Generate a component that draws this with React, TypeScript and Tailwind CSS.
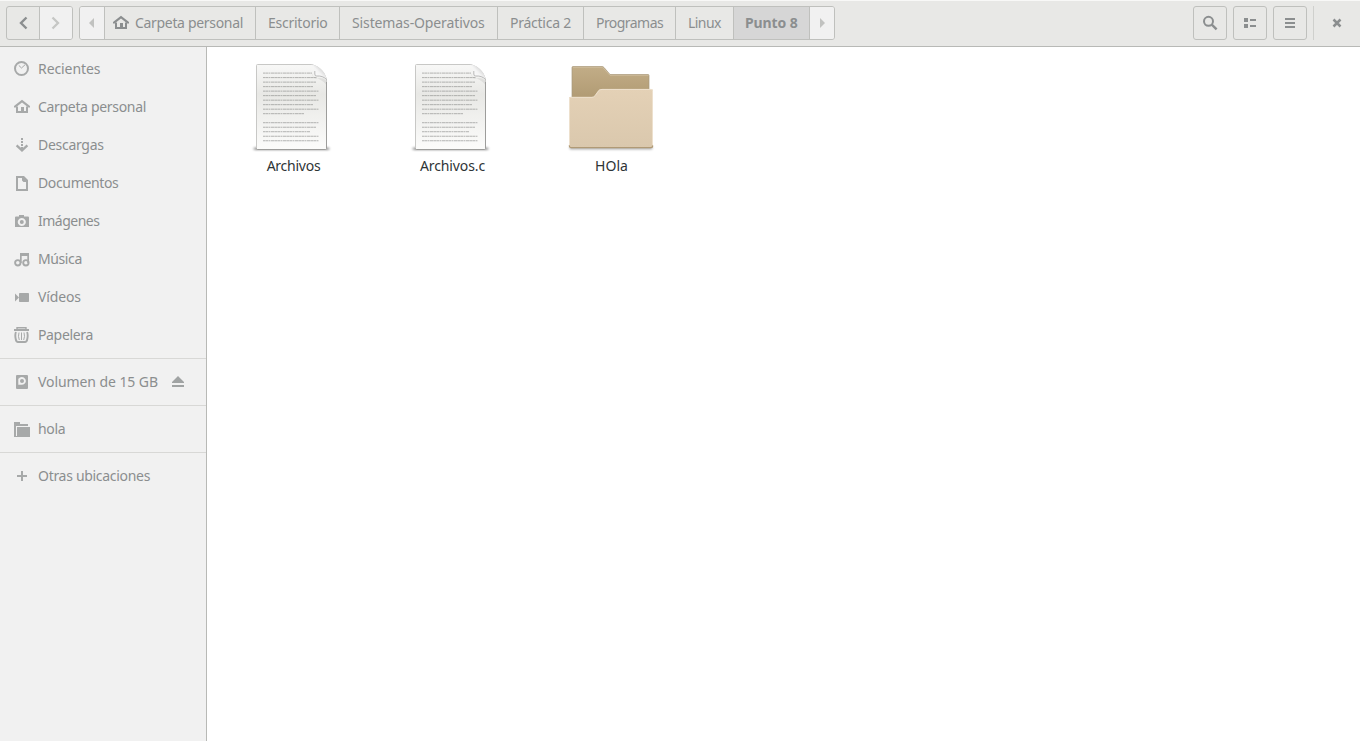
import type { ReactNode } from "react";

function Icon({ children, className = "" }: { children: ReactNode; className?: string }) {
  return (
    <svg width="16" height="16" viewBox="0 0 16 16" fill="currentColor" className={`shrink-0 ${className}`}>
      {children}
    </svg>
  );
}

const home = (
  <>
    <path d="M8 .8 0 7v1.6h1.6L8 3.6l6.4 5H16V7z" />
    <path d="M2 7.5V14h12V7.5h-2V12h-2V8H7v4H4V7.5z" />
  </>
);

const icons: Record<string, ReactNode> = {
  recent: (
    <g fill="none" stroke="currentColor">
      <circle cx="7.5" cy="7.5" r="6.5" strokeWidth="2" />
      <path d="m4.8 4.4 2.7 2.6L11 3.8" />
    </g>
  ),
  home,
  download: (
    <>
      <path d="M7 1h2v2H7zM7 4h2v2H7zM7 7h2v2H7zM7 10h2v3H7z" />
      <path d="m2.6 8.4 5.4 5 5.4-5" fill="none" stroke="currentColor" strokeWidth="2.3" />
    </>
  ),
  document: <path fillRule="evenodd" d="M2 1h8l4 4v11H2zm2 2v11h8V7H9.500L8 5.500V3z" />,
  camera: (
    <>
      <path fillRule="evenodd" d="M5 2h5v1.5h4q1 0 1 1V14H1V4.5q0-1 1-1h3zM7.8 5a4 4 0 1 0 .01 0z" />
      <circle cx="7.8" cy="9" r="2" />
    </>
  ),
  music: (
    <>
      <path d="M6 2h9v10h-1.7V5H7.7v7H6z" />
      <g fill="none" stroke="currentColor" strokeWidth="1.9">
        <circle cx="3.8" cy="11.8" r="2.7" />
        <circle cx="11.9" cy="11.8" r="2.7" />
      </g>
    </>
  ),
  video: (
    <>
      <path d="M1 4.5v8l4-4z" />
      <rect x="5" y="4" width="10" height="9" rx=".7" />
    </>
  ),
  trash: (
    <g fill="none" stroke="currentColor">
      <path d="M0 3h15" strokeWidth="2" />
      <path d="M3 2V.7h9V2" strokeWidth="1.4" />
      <path d="M1.9 5Q.8 8 1.7 12q.5 3 2.3 3h7q1.8 0 2.3-3 .9-4-.2-7" strokeWidth="1.9" />
      <path d="M7.5 5.5V13M5 5.5q-1.200 4 .3 7.5M10 5.5q1.200 4-.3 7.5" />
    </g>
  ),
  disk: (
    <>
      <path fillRule="evenodd" d="M2 2q0-1 1-1h10q1 0 1 1v12q0 1-1 1H3q-1 0-1-1zM4.3 3v7.8H8A3.9 3.9 0 1 0 4.5 5z" />
      <circle cx="8" cy="7" r="2" />
    </>
  ),
  folder: (
    <>
      <path d="M0 1h6v2h8v2H2v11H0z" />
      <path d="M3 6h13v10H3z" />
      <path d="M0 15h16v1H0z" />
    </>
  ),
  plus: <path d="M7 3h2v4h4v2H9v4H7V9H3V7h4z" />,
};

function PlaceRow({ icon, label, tracking, eject }: { icon: string; label: string; tracking: string; eject?: boolean }) {
  return (
    <div className="flex h-[38px] items-center pl-[14px] text-[#8b8e8f]">
      <Icon className="text-[#a7a9a9]">{icons[icon]}</Icon>
      <span className={`ml-2 pb-[2px] whitespace-nowrap ${tracking}`}>{label}</span>
      {eject && (
        <svg width="12" height="12" viewBox="0 0 12 12" className="mr-[22px] ml-auto text-[#a0a3a3]" fill="currentColor">
          <path d="m6 0 6 6v1H0V6zM0 9h12v2H0z" />
        </svg>
      )}
    </div>
  );
}

function Divider() {
  return <div className="my-1 h-px bg-[#d8d8d6]" />;
}

const places = [
  { icon: "recent", label: "Recientes", tracking: "tracking-[-0.08px]" },
  { icon: "home", label: "Carpeta personal", tracking: "tracking-[-0.32px]" },
  { icon: "download", label: "Descargas", tracking: "tracking-[-0.28px]" },
  { icon: "document", label: "Documentos", tracking: "tracking-[-0.35px]" },
  { icon: "camera", label: "Imágenes", tracking: "tracking-[-0.5px]" },
  { icon: "music", label: "Música", tracking: "tracking-[-0.4px]" },
  { icon: "video", label: "Vídeos", tracking: "tracking-[-0.15px]" },
  { icon: "trash", label: "Papelera", tracking: "tracking-[-0.35px]" },
];

const crumbs = [
  { label: "Escritorio", box: "w-[84px]", tracking: "tracking-[-0.25px]" },
  { label: "Sistemas-Operativos", box: "w-[158px]", tracking: "tracking-[-0.12px]" },
  { label: "Práctica 2", box: "w-[86px]", tracking: "tracking-[-0.25px]" },
  { label: "Programas", box: "w-[92px]", tracking: "tracking-[-0.55px]" },
  { label: "Linux", box: "w-[58px]", tracking: "tracking-[-0.55px]" },
];

function ToolButton({ children }: { children: ReactNode }) {
  return (
    <button className="flex h-[34px] w-[34px] items-center justify-center rounded-[3px] border border-[#bfc0bd]">
      <Icon>{children}</Icon>
    </button>
  );
}

function HeaderBar() {
  return (
    <header className="flex h-[47px] shrink-0 items-start border-t border-b border-t-[#f8f8f7] border-b-[#b8b9b6] bg-[#e8e8e6] px-[6px] pt-[5px] text-[#8b8e8f]">
      <div className="flex h-[34px] w-[67px] overflow-hidden rounded-[3px] border border-[#bfc0bd]">
        <button className="flex w-[33px] items-center justify-center border-r border-[#bfc0bd]">
          <Icon>
            <path d="M11.5 2.5 6 8l5.5 5.5" fill="none" stroke="currentColor" strokeWidth="2.4" />
          </Icon>
        </button>
        <button className="flex flex-1 items-center justify-center bg-[#f1f1f1] text-[#c6c7c5]">
          <Icon>
            <path d="M4.5 2.5 10 8l-5.5 5.5" fill="none" stroke="currentColor" strokeWidth="2.3" />
          </Icon>
        </button>
      </div>
      <nav className="ml-[6px] flex h-[34px] w-[756px] overflow-hidden rounded-[3px] border border-[#bfc0bd]">
        <button className="flex w-[25px] shrink-0 items-center border-r border-[#bfc0bd] bg-[#f1f1f1] pl-[9px] text-[#c1c2c0]">
          <svg width="5" height="10" viewBox="0 0 5 10" fill="currentColor"><path d="M5 0v10L0 5z" /></svg>
        </button>
        <button className="flex w-[151px] shrink-0 items-center border-r border-[#bfc0bd] pl-2">
          <Icon>{home}</Icon>
          <span className="ml-[6px] pb-[2px] whitespace-nowrap tracking-[-0.32px]">Carpeta personal</span>
        </button>
        {crumbs.map((c) => (
          <button key={c.label} className={`flex shrink-0 items-center border-r border-[#bfc0bd] pb-[2px] pl-3 whitespace-nowrap ${c.box} ${c.tracking}`}>
            {c.label}
          </button>
        ))}
        <button className="flex w-[76px] shrink-0 items-center border-r border-[#bfc0bd] bg-[#d6d6d6] pb-[2px] pl-[11px] font-bold whitespace-nowrap tracking-[-0.1px]">
          Punto 8
        </button>
        <button className="flex flex-1 items-center bg-[#f1f1f1] pl-[10px] text-[#c1c2c0]">
          <svg width="5" height="10" viewBox="0 0 5 10" fill="currentColor"><path d="M0 0v10l5-5z" /></svg>
        </button>
      </nav>
      <div className="ml-auto flex gap-[6px]">
        <ToolButton>
          <circle cx="6.5" cy="6.3" r="4.5" fill="none" stroke="currentColor" strokeWidth="2" />
          <path d="m9.8 9.6 4.8 4.7" fill="none" stroke="currentColor" strokeWidth="2.4" />
        </ToolButton>
        <ToolButton>
          <path d="M2 3h4v4H2zM2 9h4v4H2zM8 4h6v2H8zM8 10h6v2H8z" />
        </ToolButton>
        <ToolButton>
          <path d="M3 3h10v2H3zM3 7h10v2H3zM3 11h10v2H3z" />
        </ToolButton>
        <div className="h-[34px] w-px bg-[#cfd0cd]" />
        <button className="flex h-[34px] w-[34px] items-center justify-center">
          <Icon>
            <path d="m4.500 4.500 7 7m0-7-7 7" fill="none" stroke="currentColor" strokeWidth="2.500" />
          </Icon>
        </button>
      </div>
    </header>
  );
}

const lines = [49, 54, 53, 50, 56, 53, 56, 50, 56, 41, 0, 56, 53, 47, 56, 56];

function FileArt({ id }: { id: string }) {
  return (
    <svg width="95" height="100" viewBox="0 0 95 100">
      <defs>
        <linearGradient id={`${id}-page`} x1="0" y1="0" x2="0" y2="1">
          <stop offset="0" stopColor="#f8f8f7" />
          <stop offset=".35" stopColor="#e8e8e5" />
          <stop offset="1" stopColor="#fcfcfb" />
        </linearGradient>
        <linearGradient id={`${id}-fold`} x1="0" y1=".9" x2=".8" y2=".2">
          <stop offset="0" stopColor="#b4b4b4" />
          <stop offset=".3" stopColor="#fafafa" />
          <stop offset=".6" stopColor="#f4f4f4" />
          <stop offset="1" stopColor="#cacaca" />
        </linearGradient>
        <filter id={`${id}-blur`} x="-20%" y="-200%" width="140%" height="500%">
          <feGaussianBlur stdDeviation="1.8 .9" />
        </filter>
      </defs>
      <rect x="8" y="92.500" width="75" height="2.500" fill="#000" opacity=".45" filter={`url(#${id}-blur)`} />
      <path d="M11.500 9.500H66Q77 13 80.500 24V93.500Q80.500 94.500 79.500 94.500H11.500Q10.500 94.500 10.500 93.500V10.500Q10.500 9.500 11.500 9.500Z" fill={`url(#${id}-page)`} stroke="#c8c8c6" />
      <path d="M10.500 93.500q0 1 1 1h68q1 0 1-1V27" fill="none" stroke="#9d9d9b" />
      {lines.map((w, i) => (
        <path key={i} d={`M17 ${18.1 + i * 4.51}h${w}`} stroke="#858684" strokeWidth="1" strokeDasharray="2 .3 3 .4 1.5 .5 4 .3" opacity={w ? ".6" : "0"} />
      ))}
      <path d="M66 18q2 6 4 5.500 7-1.500 10 2v4q-4-5-10-6.500-4-.5-4-5z" fill="#000" opacity=".07" />
      <path d="M65 9.800q4 2 3.800 9 0 2.500 2 2.200 6-.5 9.700 3.500-.5-5.500-5-10T65 9.800z" fill={`url(#${id}-fold)`} />
      <path d="M68.800 16v3q0 2.300 2 2 6-.5 9.700 3.500" fill="none" stroke="#a9a9a9" strokeWidth=".8" />
    </svg>
  );
}

function FolderArt() {
  return (
    <svg width="95" height="100" viewBox="0 0 95 100">
      <defs>
        <linearGradient id="folder-back" x1="0" y1="0" x2="0" y2="1">
          <stop offset="0" stopColor="#c2ad87" />
          <stop offset=".6" stopColor="#b29c75" />
        </linearGradient>
        <linearGradient id="folder-front" x1="0" y1="0" x2="0" y2="1">
          <stop offset="0" stopColor="#e4d1b6" />
          <stop offset="1" stopColor="#dac8ad" />
        </linearGradient>
        <filter id="folder-blur" x="-20%" y="-200%" width="140%" height="500%">
          <feGaussianBlur stdDeviation="1" />
        </filter>
      </defs>
      <rect x="5.5" y="91" width="83" height="3.500" rx="1" fill="#000" opacity=".3" filter="url(#folder-blur)" />
      <path d="M9 11.500h29q1 0 2 1l6 7h38q1 0 1 1V60H8V12.500q0-1 1-1z" fill="url(#folder-back)" stroke="#a8987b" strokeWidth=".7" />
      <path d="M9 12.300h29.500l7.500 8h38.500" fill="none" stroke="#cfbf9f" strokeWidth=".8" />
      <path d="M6 42h22q2 0 3-1.500l3-4.500q1-2 4-2h49.500q1.500 0 1.500 1.500V91q0 2-2 2H7q-2 0-2-2V43q0-1 1-1z" fill="url(#folder-front)" />
      <path d="M5.500 90V43q0-.700 1-.700H28q2 0 3.200-1.800l3-4.200q1.200-1.900 3.800-1.900h49q1.500 0 1.500 1.500v54" fill="none" stroke="#eee2d0" strokeWidth=".9" />
      <path d="M5.200 90.500Q5.500 92.600 7 92.600h80q1.600 0 1.800-2" fill="none" stroke="#b09a76" strokeWidth="1.200" />
    </svg>
  );
}

function Item({ art, name, tracking }: { art: ReactNode; name: string; tracking: string }) {
  return (
    <div className="flex w-[159px] flex-col items-center">
      {art}
      <span className={`h-[22px] leading-[22px] whitespace-nowrap text-[#2e3436] ${tracking}`}>{name}</span>
    </div>
  );
}

export default function App() {
  return (
    <div className="flex h-[741px] w-[1360px] flex-col overflow-hidden bg-white font-['Noto_Sans','Open_Sans',sans-serif] text-[14px]">
      <HeaderBar />
      <div className="flex min-h-0 flex-1">
        <aside className="w-[207px] shrink-0 border-r border-[#b8b9b6] bg-[#f1f1f1] pt-[3px]">
          {places.map((p) => <PlaceRow key={p.label} {...p} />)}
          <Divider />
          <PlaceRow icon="disk" label="Volumen de 15 GB" tracking="tracking-[-0.08px]" eject />
          <Divider />
          <PlaceRow icon="folder" label="hola" tracking="tracking-[-0.3px]" />
          <Divider />
          <PlaceRow icon="plus" label="Otras ubicaciones" tracking="tracking-[-0.3px]" />
        </aside>
        <main className="flex flex-1 items-start pt-2 pl-[7px]">
          <Item art={<FileArt id="archivos" />} name="Archivos" tracking="tracking-[-0.25px]" />
          <Item art={<FileArt id="archivos-c" />} name="Archivos.c" tracking="tracking-[-0.12px]" />
          <Item art={<FolderArt />} name="HOla" tracking="tracking-[0px]" />
        </main>
      </div>
    </div>
  );
}
